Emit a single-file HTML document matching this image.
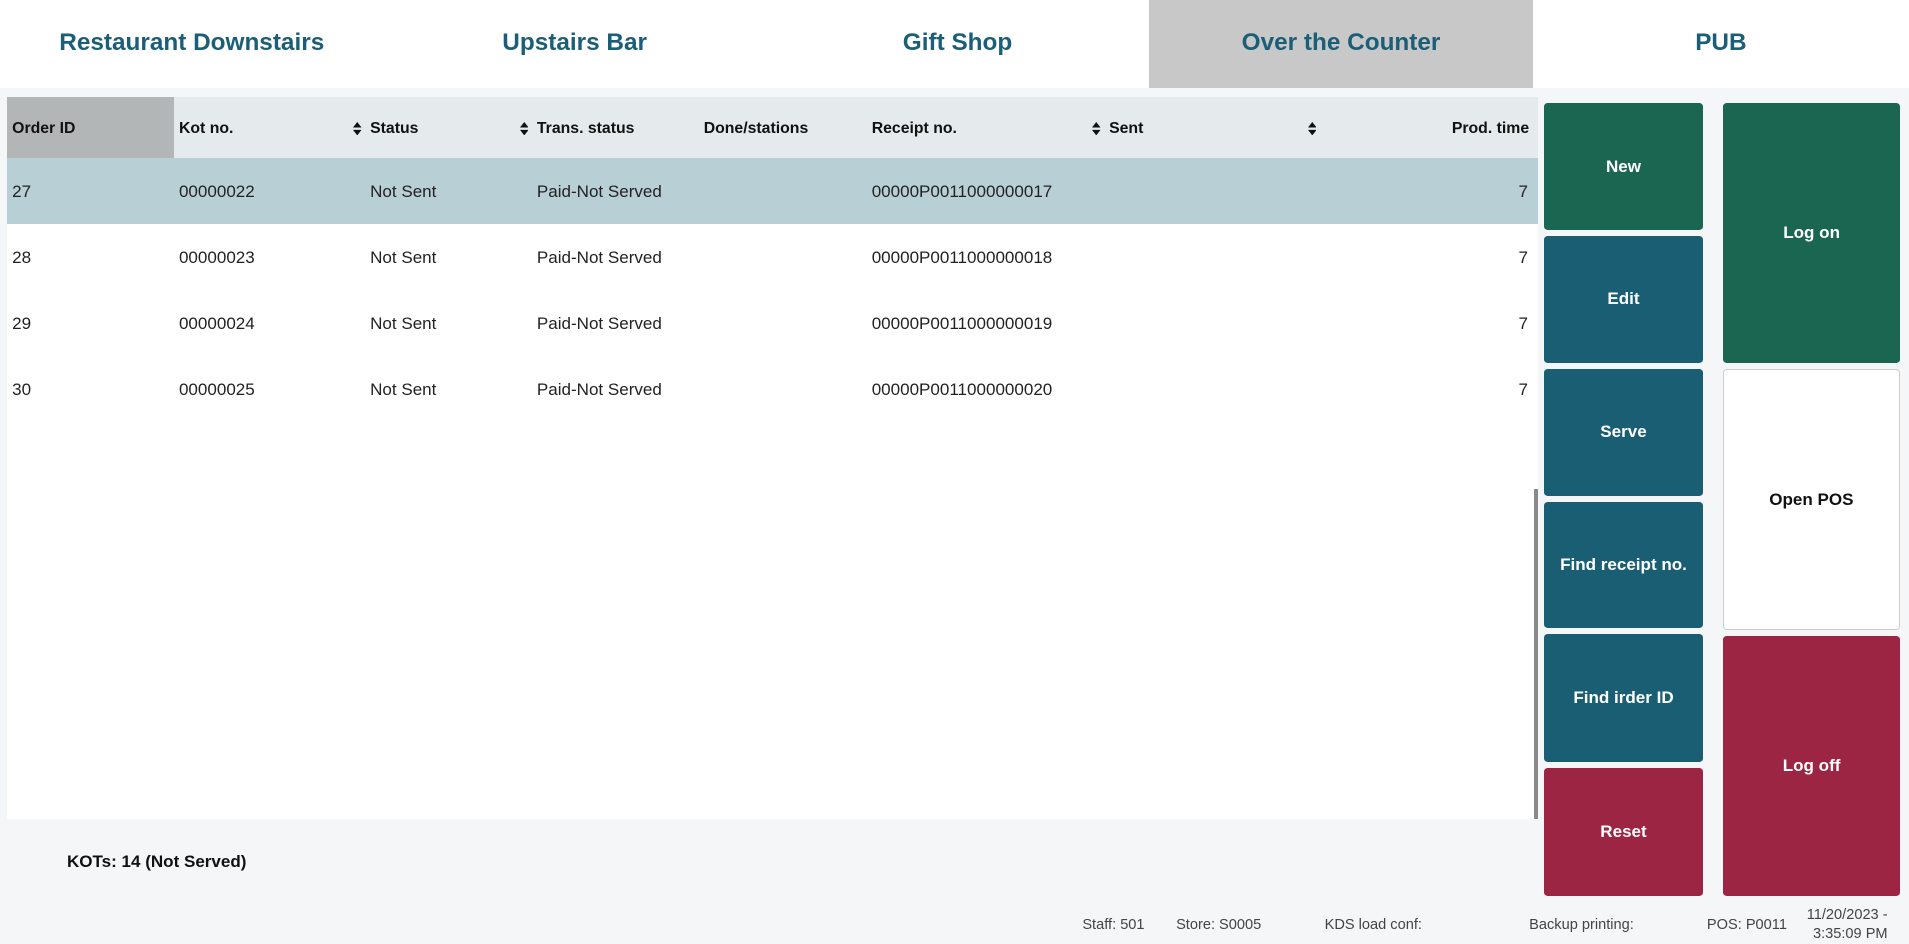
<!DOCTYPE html>
<html><head><meta charset="utf-8"><style>
html,body{margin:0;padding:0;background:#f5f6f8;overflow:hidden}
#w{position:relative;width:1568px;height:775px;zoom:1.21747;font-family:"Liberation Sans",sans-serif;color:#222}
.abs{position:absolute}
.tab{position:absolute;top:0;height:72px;line-height:71px;text-align:center;font-weight:bold;font-size:20px;color:#1a5e78;background:#fff}
.tbl{position:absolute;left:6px;top:80px;width:1257px;height:593px;background:#fff}
.hd{position:absolute;left:0;top:0;width:1257px;height:50px;background:#e5eaed}
.h{position:absolute;top:1px;line-height:50px;font-size:13px;font-weight:bold;color:#111}
.r{position:absolute;left:0;width:1257px;height:54px}
.c{position:absolute;top:1px;line-height:54px;font-size:14px;color:#222}
.b{position:absolute;border-radius:3px;color:#fff;font-weight:bold;font-size:14px;display:flex;align-items:center;justify-content:center}
.g{background:#1b6650}.bl{background:#1a5e74}.rd{background:#9b2543}
.f{position:absolute;font-size:12px;color:#444;top:753px}
</style></head><body><div id="w">
<div class="abs" style="left:0;top:0;width:1568px;height:72px;background:#fff"></div>
<div class="tab" style="left:0;width:315px">Restaurant Downstairs</div>
<div class="tab" style="left:315px;width:314px">Upstairs Bar</div>
<div class="tab" style="left:629px;width:315px">Gift Shop</div>
<div class="tab" style="left:944px;width:315px;background:#c8c8c8">Over the Counter</div>
<div class="tab" style="left:1259px;width:309px">PUB</div>

<div class="tbl">
<div class="hd"></div>
<div class="abs" style="left:0;top:0;width:137px;height:50px;background:#b3b6b7"></div>
<div class="h" style="left:4px">Order ID</div>
<div class="h" style="left:141px">Kot no.</div>
<div class="h" style="left:298px">Status</div>
<div class="h" style="left:435px">Trans. status</div>
<div class="h" style="left:572px">Done/stations</div>
<div class="h" style="left:710px">Receipt no.</div>
<div class="h" style="left:905px">Sent</div>
<div class="h" style="right:7px">Prod. time</div>
<svg class="abs" style="left:284px;top:20px" width="7" height="11"><path d="M0 4.5L3.5 0L7 4.5ZM0 6.5L7 6.5L3.5 11Z" fill="#111"/></svg>
<svg class="abs" style="left:421px;top:20px" width="7" height="11"><path d="M0 4.5L3.5 0L7 4.5ZM0 6.5L7 6.5L3.5 11Z" fill="#111"/></svg>
<svg class="abs" style="left:891px;top:20px" width="7" height="11"><path d="M0 4.5L3.5 0L7 4.5ZM0 6.5L7 6.5L3.5 11Z" fill="#111"/></svg>
<svg class="abs" style="left:1068px;top:20px" width="7" height="11"><path d="M0 4.5L3.5 0L7 4.5ZM0 6.5L7 6.5L3.5 11Z" fill="#111"/></svg>

<div class="r" style="top:50px;background:#b8cfd5"><div class="c" style="left:4px">27</div><div class="c" style="left:141px">00000022</div><div class="c" style="left:298px">Not Sent</div><div class="c" style="left:435px">Paid-Not Served</div><div class="c" style="left:710px">00000P0011000000017</div><div class="c" style="right:8px">7</div></div>
<div class="r" style="top:104px"><div class="c" style="left:4px">28</div><div class="c" style="left:141px">00000023</div><div class="c" style="left:298px">Not Sent</div><div class="c" style="left:435px">Paid-Not Served</div><div class="c" style="left:710px">00000P0011000000018</div><div class="c" style="right:8px">7</div></div>
<div class="r" style="top:158px"><div class="c" style="left:4px">29</div><div class="c" style="left:141px">00000024</div><div class="c" style="left:298px">Not Sent</div><div class="c" style="left:435px">Paid-Not Served</div><div class="c" style="left:710px">00000P0011000000019</div><div class="c" style="right:8px">7</div></div>
<div class="r" style="top:212px"><div class="c" style="left:4px">30</div><div class="c" style="left:141px">00000025</div><div class="c" style="left:298px">Not Sent</div><div class="c" style="left:435px">Paid-Not Served</div><div class="c" style="left:710px">00000P0011000000020</div><div class="c" style="right:8px">7</div></div>
<div class="abs" style="left:1254px;top:322px;width:3px;height:271px;background:#8a8a8a"></div>
</div>

<div class="b g" style="left:1268px;top:85px;width:131px;height:104px">New</div>
<div class="b bl" style="left:1268px;top:194px;width:131px;height:104px">Edit</div>
<div class="b bl" style="left:1268px;top:303px;width:131px;height:104px">Serve</div>
<div class="b bl" style="left:1268px;top:412px;width:131px;height:104px">Find receipt no.</div>
<div class="b bl" style="left:1268px;top:521px;width:131px;height:105px">Find irder ID</div>
<div class="b rd" style="left:1268px;top:631px;width:131px;height:105px">Reset</div>
<div class="b g" style="left:1415px;top:85px;width:146px;height:213px">Log on</div>
<div class="b" style="left:1415px;top:303px;width:144px;height:213px;background:#fff;border:1px solid #ccc;color:#111">Open POS</div>
<div class="b rd" style="left:1415px;top:522px;width:146px;height:214px">Log off</div>

<div class="abs" style="left:55px;top:700px;font-size:14px;font-weight:bold;color:#111">KOTs: 14 (Not Served)</div>
<div class="f" style="left:889px">Staff: 501</div>
<div class="f" style="left:966px">Store: S0005</div>
<div class="f" style="left:1088px">KDS load conf:</div>
<div class="f" style="left:1256px">Backup printing:</div>
<div class="f" style="left:1402px">POS: P0011</div>
<div class="f" style="left:1484px;top:744px;line-height:16px;text-align:right">11/20/2023 -<br>3:35:09 PM</div>
</div></body></html>
